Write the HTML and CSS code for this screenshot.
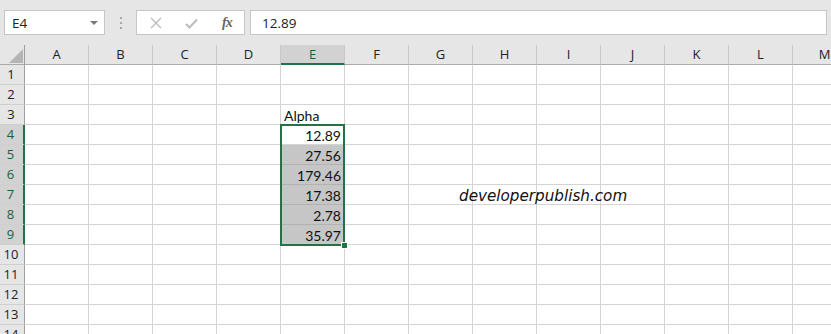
FILE: index.html
```html
<!DOCTYPE html>
<html lang="en">
<head>
    <meta charset="UTF-8">
    <meta name="viewport" content="width=device-width, initial-scale=1.0">
    <link rel="stylesheet" href="styles.css">
    <title>Book1 - Excel</title>
</head>
<body>

<div class="toolbar">
    <div class="namebox">
        <span>E4</span>
        <svg class="caret" width="8" height="4" viewBox="0 0 8 4"><path d="M0 0H8L4 4Z" fill="#7a7a7a"/></svg>
    </div>
    <div class="grip"><i></i><i></i><i></i></div>
    <div class="fxbox">
        <svg class="ico" width="12" height="12" viewBox="0 0 12 12"><path d="M1 1L11 11M11 1L1 11" stroke="#bcbcbc" stroke-width="1.3" fill="none"/></svg>
        <svg class="ico" width="13" height="11" viewBox="0 0 13 11"><path d="M1 6L4.5 9.5L12 1.5" stroke="#bcbcbc" stroke-width="2" fill="none"/></svg>
        <span class="fx">fx</span>
    </div>
    <div class="formula">12.89</div>
</div>

<div class="sheet">
    <div class="row head">
        <div class="rh corner">
            <svg width="14" height="14" viewBox="0 0 14 14"><path d="M14 0V14H0Z" fill="#b5b5b5"/></svg>
        </div>
        <div class="ch">A</div><div class="ch">B</div><div class="ch">C</div><div class="ch">D</div>
        <div class="ch on">E</div><div class="ch">F</div><div class="ch">G</div><div class="ch">H</div>
        <div class="ch">I</div><div class="ch">J</div><div class="ch">K</div><div class="ch">L</div><div class="ch">M</div>
    </div>
    <div id="rows"></div>

    <div class="selection"></div>
    <div class="handle"></div>
    <div class="textbox">developerpublish.com</div>
</div>

<script>
    var values = {3: ["Alpha", "txt"], 4: ["12.89", "num"], 5: ["27.56", "num sel"], 6: ["179.46", "num sel"],
                  7: ["17.38", "num sel"], 8: ["2.78", "num sel"], 9: ["35.97", "num sel"]};
    var container = document.getElementById("rows");
    for (var r = 1; r <= 14; r++) {
        var row = document.createElement("div");
        row.setAttribute("class", "row");
        var rh = document.createElement("div");
        rh.setAttribute("class", (r >= 4 && r <= 9) ? "rh on" : "rh");
        rh.innerHTML = r;
        row.appendChild(rh);
        for (var c = 0; c < 13; c++) {
            var cell = document.createElement("div");
            cell.setAttribute("class", "cell");
            if (c == 4 && values[r]) {
                cell.setAttribute("class", "cell " + values[r][1]);
                cell.innerHTML = values[r][0];
            }
            row.appendChild(cell);
        }
        container.appendChild(row);
    }
</script>

</body>
</html>
```

FILE: styles.css
```css
body{
    margin: 0;
    background-color: #ffffff;
    overflow: hidden;
    font-family: "Open Sans", "Liberation Sans", sans-serif;
}
.toolbar{
    display: flex;
    align-items: flex-start;
    height: 45px;
    box-sizing: border-box;
    padding: 10px 4px 0 4px;
    background-color: #e6e6e6;
}
.namebox, .fxbox, .formula{
    box-sizing: border-box;
    height: 25px;
    border: 1px solid #c6c6c6;
    background-color: #ffffff;
    font-size: 13.5px;
    color: #222;
}
.namebox{
    width: 101px;
    display: flex;
    align-items: center;
    justify-content: space-between;
    padding: 0 6px 0 7px;
}
.grip{
    width: 31px;
    display: flex;
    flex-direction: column;
    align-items: center;
    gap: 3px;
    padding-top: 7px;
}
.grip i{
    display: block;
    width: 2px;
    height: 2px;
    background-color: #a8a8a8;
}
.fxbox{
    width: 109px;
    display: flex;
    align-items: center;
    padding: 1px 0 0 13px;
}
.fxbox .ico{
    margin-right: 23px;
}
.fxbox .ico + .ico{
    margin-right: 24px;
}
.fx{
    font-family: "Liberation Serif", serif;
    font-style: italic;
    font-weight: bold;
    font-size: 14px;
    color: #666;
    letter-spacing: -1px;
}
.formula{
    flex: 1;
    margin-left: 5px;
    display: flex;
    align-items: center;
    padding-left: 11px;
}

.sheet{
    position: relative;
    width: 857px;
}
.row{
    display: flex;
    height: 20px;
}
.rh, .ch, .cell{
    box-sizing: border-box;
    flex: none;
    height: 20px;
}
.rh{
    width: 25px;
    background-color: #e6e6e6;
    border-right: 1px solid #9f9f9f;
    border-bottom: 1px solid #cfcfcf;
    font-size: 13px;
    color: #222;
    text-align: center;
    line-height: 19px;
    padding-right: 2px;
}
.rh.on{
    background-color: #d2d2d2;
    border-right: 2px solid #217346;
    color: #1d5e3a;
}
.head .rh, .head .ch{
    border-bottom: 1px solid #ababab;
}
.corner{
    display: flex;
    align-items: flex-end;
    justify-content: flex-end;
    padding: 0 1px 1px 0;
}
.ch{
    width: 64px;
    background-color: #e6e6e6;
    border-right: 1px solid #c8c8c8;
    text-align: center;
    font-size: 13px;
    line-height: 19px;
    color: #222;
}
.ch.on{
    background-color: #d2d2d2;
    border-bottom: 2px solid #217346 !important;
    color: #1d5e3a;
}
.cell{
    width: 64px;
    border-right: 1px solid #d4d4d4;
    border-bottom: 1px solid #d4d4d4;
    font-family: Lato, "Liberation Sans", sans-serif;
    font-size: 14px;
    line-height: 22px;
    color: #111;
    white-space: nowrap;
}
.cell.txt{
    padding-left: 3px;
}
.cell.num{
    text-align: right;
    padding-right: 3px;
}
.cell.sel{
    background-color: #c6c6c6;
    border-bottom-color: #b2b2b2;
}

.selection{
    position: absolute;
    left: 280px;
    top: 79px;
    width: 65px;
    height: 122px;
    box-sizing: border-box;
    border: 2px solid #217346;
}
.handle{
    position: absolute;
    left: 341px;
    top: 197px;
    width: 5px;
    height: 5px;
    background-color: #217346;
    border: 1px solid #ffffff;
}
.textbox{
    position: absolute;
    left: 459px;
    top: 142px;
    font-family: "DejaVu Sans", sans-serif;
    font-style: italic;
    font-size: 15.2px;
    color: #111;
}
```
